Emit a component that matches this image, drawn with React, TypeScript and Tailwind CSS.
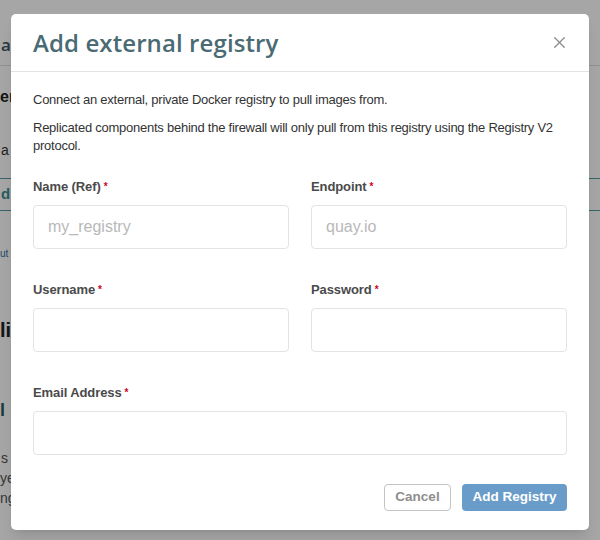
import { X } from 'lucide-react';

const Req = () => <span className="text-[#d0021b] text-[10px] align-top ml-[3px]">*</span>;

function Field({ label, placeholder }: { label: string; placeholder?: string }) {
  return (
    <div>
      <label className="block text-[13px] leading-[18px] font-bold text-[#4a4a4a] tracking-[-0.1px]">
        {label}<Req />
      </label>
      <input
        placeholder={placeholder}
        className="mt-[9px] w-full h-[44px] border border-[#e3e3e3] rounded-[4px] px-[14px] text-[16px] text-[#333] placeholder:text-[#b8b8b8] outline-none"
      />
    </div>
  );
}

export default function App() {
  return (
    <div className="relative w-[600px] h-[540px] overflow-hidden bg-white" style={{ fontFamily: '"Liberation Sans", Arial, sans-serif' }}>
      {/* page behind the overlay */}
      <div className="h-[66px] border-b border-[#ddd] pt-[33px]">
        <div className="ml-[1px] text-[17px] leading-[24px] font-semibold text-[#3a5a62] whitespace-nowrap" style={{ fontFamily: '"Open Sans", sans-serif' }}>agement</div>
      </div>
      <div className="flex flex-col">
        <span className="mt-[19px] text-[16px] leading-[24px] font-bold text-[#222] whitespace-nowrap">er</span>
        <span className="mt-[32px] ml-[1px] text-[14px] leading-[18px] text-[#333] whitespace-nowrap">a</span>
        <div className="mt-[19px] h-[33px] border-y border-[#4f9aa0] flex items-center">
          <span className="ml-[1px] text-[15px] font-bold text-[#3f8f96] whitespace-nowrap">d</span>
        </div>
        <span className="mt-[36px] text-[10px] leading-[14px] text-[#2f6fa6] whitespace-nowrap">ut</span>
        <span className="mt-[57px] text-[20px] leading-[24px] font-bold text-[#222] whitespace-nowrap">li</span>
        <span className="mt-[57px] text-[18px] leading-[22px] font-bold text-[#2a5a62] whitespace-nowrap">l</span>
        <span className="mt-[27px] ml-[1px] text-[14px] leading-[20px] text-[#555] whitespace-nowrap">s</span>
        <span className="text-[14px] leading-[20px] text-[#555] whitespace-nowrap">ye</span>
        <span className="text-[14px] leading-[20px] text-[#555] whitespace-nowrap">ng</span>
      </div>
      <div className="absolute inset-0 bg-black/35" />

      {/* modal */}
      <div className="absolute left-[11px] top-[14px] w-[578px] h-[516px] bg-white rounded-[5px] shadow-lg flex flex-col">
        <div className="h-[58px] flex items-center justify-between pl-[22px] pr-[20px] border-b border-[#dfe3e4]">
          <h2 className="text-[24px] font-semibold text-[#4a6b73] tracking-[0.1px]" style={{ fontFamily: '"Open Sans", sans-serif' }}>
            Add external registry
          </h2>
          <button className="text-[#8a8a8a]"><X size={19} strokeWidth={1.6} /></button>
        </div>
        <div className="px-[22px] pt-[19px] flex-1 flex flex-col">
          <p className="text-[13px] leading-[18px] tracking-[-0.25px] text-[#333]">Connect an external, private Docker registry to pull images from.</p>
          <p className="mt-[10px] text-[13px] leading-[18px] tracking-[-0.25px] text-[#333]">
            Replicated components behind the firewall will only pull from this registry using the Registry V2 protocol.
          </p>
          <div className="mt-[23px] grid grid-cols-2 gap-x-[22px] gap-y-[32px]">
            <Field label="Name (Ref)" placeholder="my_registry" />
            <Field label="Endpoint" placeholder="quay.io" />
            <Field label="Username" />
            <Field label="Password" />
            <div className="col-span-2"><Field label="Email Address" /></div>
          </div>
          <div className="mt-[29px] flex justify-end gap-[11px]">
            <button className="h-[27px] w-[67px] rounded-[4px] border border-[#c4c4c4] text-[13.5px] font-bold text-[#8e8e8e]">Cancel</button>
            <button className="h-[27px] w-[105px] rounded-[4px] bg-[#6a9cca] text-[13.5px] font-bold text-white">Add Registry</button>
          </div>
        </div>
      </div>
    </div>
  );
}
